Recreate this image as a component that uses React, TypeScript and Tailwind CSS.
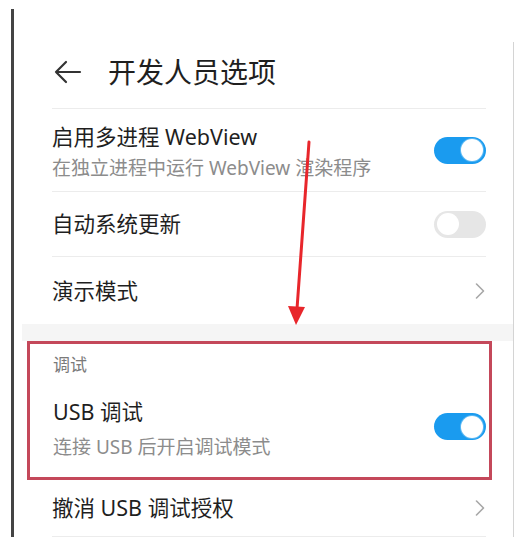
import { ChevronRight } from 'lucide-react';

const font = { fontFamily: '"Noto Sans", "Noto Sans CJK SC", sans-serif' };

function Toggle({ on }: { on: boolean }) {
  return on ? (
    <div className="w-[52px] h-[27px] rounded-full bg-[#1a9bef] flex items-center justify-end pr-[3px] shrink-0">
      <div className="w-[22px] h-[22px] rounded-full bg-white ring-1 ring-[#5bb8f3]" />
    </div>
  ) : (
    <div className="w-[52px] h-[27px] rounded-full bg-[#e6e6e6] flex items-center pl-[3px] shrink-0">
      <div className="w-[22px] h-[22px] rounded-full bg-white" />
    </div>
  );
}

function Chevron() {
  return <ChevronRight className="w-[28px] h-[28px] text-[#a8a8a8] -mr-[8px] shrink-0" strokeWidth={1.4} />;
}

export default function App() {
  return (
    <div className="w-[522px] h-[555px] bg-white relative overflow-hidden" style={font}>
      <div className="pt-[9px] pl-[11px]">
        <div className="border-l-[3px] border-[#444] h-[528px] pt-[33px]">
          <div className="border-r border-[#d4d4d4] w-[500px] h-[495px] flex flex-col">
            {/* header */}
            <div className="mx-[38px] mr-[27px] h-[67px] pb-[6px] flex items-center border-b border-[#ececec]">
              <svg width="28" height="24" viewBox="0 0 28 24" className="ml-[2px] shrink-0">
                <path d="M26 12H2M12 2L2 12l10 10" fill="none" stroke="#333" strokeWidth="2.2" strokeLinecap="round" strokeLinejoin="round" />
              </svg>
              <span className="ml-[26px] text-[28px] leading-[34px] text-[#1f1f1f]">开发人员选项</span>
            </div>

            {/* row 1 */}
            <div className="ml-[38px] mr-[27px] h-[83px] flex items-center justify-between border-b border-[#ececec]">
              <div className="flex flex-col gap-[5px] pt-[2px]">
                <span className="text-[21.5px] leading-[28px] text-[#1f1f1f]">启用多进程 WebView</span>
                <span className="text-[19px] leading-[24px] text-[#8c8c8c]">在独立进程中运行 WebView 渲染程序</span>
              </div>
              <Toggle on />
            </div>

            {/* row 2 */}
            <div className="ml-[38px] mr-[27px] h-[65px] flex items-center justify-between border-b border-[#ececec]">
              <span className="text-[21.5px] leading-[28px] text-[#1f1f1f]">自动系统更新</span>
              <Toggle on={false} />
            </div>

            {/* row 3 */}
            <div className="ml-[38px] mr-[27px] h-[67px] flex items-center justify-between">
              <span className="text-[21.5px] leading-[28px] text-[#1f1f1f]">演示模式</span>
              <Chevron />
            </div>

            <div className="ml-[8px] h-[17px] bg-[#f5f5f5]" />

            {/* debug section */}
            <div className="ml-[13px] mr-[21px] h-[139px] border-[3px] border-[#c4485a] flex flex-col">
              <span className="pl-[23px] pt-[10px] text-[17px] leading-[22px] text-[#7a7a7a]">调试</span>
              <div className="pl-[23px] pr-[3px] flex-1 flex items-center justify-between">
                <div className="flex flex-col gap-[9px] pt-[4px]">
                  <span className="text-[21.5px] leading-[28px] text-[#1f1f1f]">USB 调试</span>
                  <span className="text-[19px] leading-[24px] text-[#8c8c8c]">连接 USB 后开启调试模式</span>
                </div>
                <Toggle on />
              </div>
            </div>

            {/* row 4 */}
            <div className="ml-[38px] mr-[27px] h-[57px] flex items-center justify-between border-b border-[#ececec]">
              <span className="text-[21.5px] leading-[28px] text-[#1f1f1f]">撤消 USB 调试授权</span>
              <Chevron />
            </div>
          </div>
        </div>
      </div>

      {/* red annotation arrow */}
      <svg className="absolute left-0 top-0 pointer-events-none" width="522" height="555">
        <path d="M309 142 L297 309" stroke="#e8262b" strokeWidth="3" strokeLinecap="round" />
        <path d="M288 306 L305 307 L296 325 Z" fill="#e8262b" />
      </svg>
    </div>
  );
}
